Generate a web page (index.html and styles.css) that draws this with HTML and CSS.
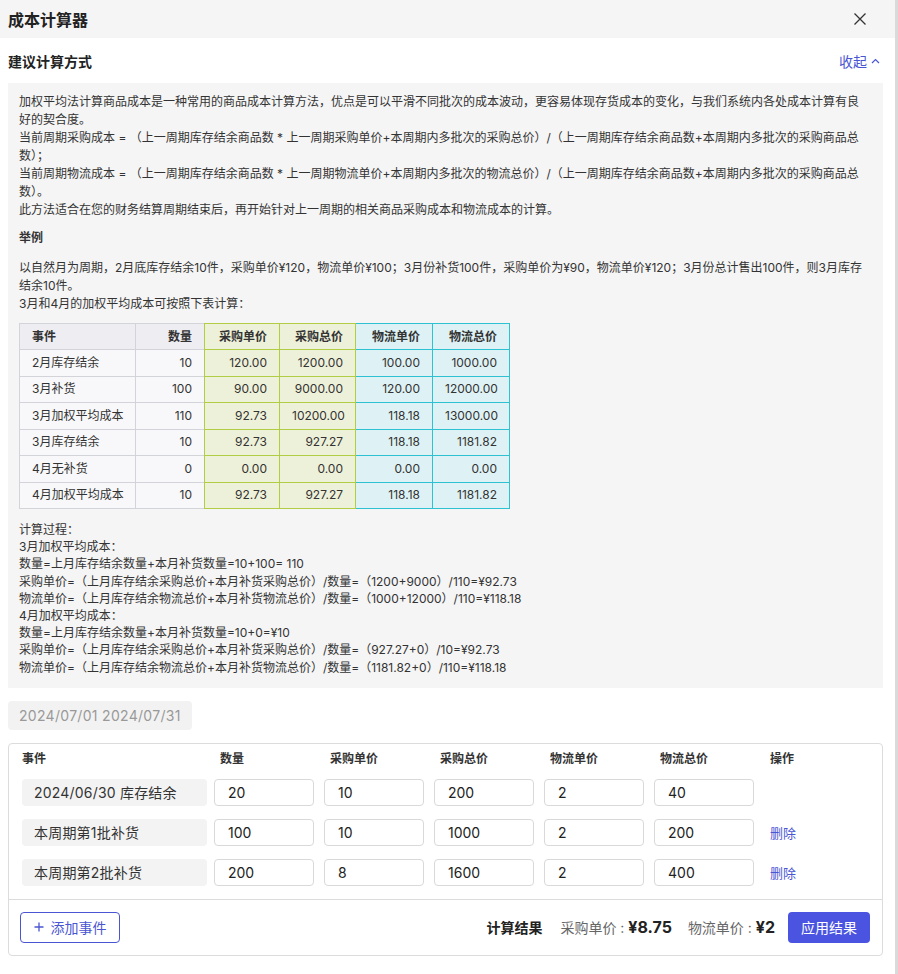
FILE: index.html
```html
<!DOCTYPE html>
<html>
  <head>
    <meta charset="utf-8">
    <title>成本计算器</title>
    <link rel="stylesheet" href="styles.css">
  </head>
  <body>
    <div class="dialog">
      <div class="dialog-header">
        <span class="dialog-title">成本计算器</span>
        <svg class="close-icon" width="14" height="14" viewBox="0 0 14 14">
          <path d="M1.5 1.5 L12.5 12.5 M12.5 1.5 L1.5 12.5" stroke="#333" stroke-width="1.3" fill="none"/>
        </svg>
      </div>

      <div class="dialog-body">
        <div class="section-head">
          <span class="section-title">建议计算方式</span>
          <a class="collapse-link">收起
            <svg width="9" height="6" viewBox="0 0 9 6">
              <path d="M1 5 L4.5 1.5 L8 5" stroke="#4a55d3" stroke-width="1.2" fill="none"/>
            </svg>
          </a>
        </div>

        <div class="tips-box">
          <p>加权平均法计算商品成本是一种常用的商品成本计算方法，优点是可以平滑不同批次的成本波动，更容易体现存货成本的变化，与我们系统内各处成本计算有良好的契合度。</p>
          <p>当前周期采购成本 = （上一周期库存结余商品数 * 上一周期采购单价+本周期内多批次的采购总价）/（上一周期库存结余商品数+本周期内多批次的采购商品总数）；</p>
          <p>当前周期物流成本 = （上一周期库存结余商品数 * 上一周期物流单价+本周期内多批次的物流总价）/（上一周期库存结余商品数+本周期内多批次的采购商品总数）。</p>
          <p>此方法适合在您的财务结算周期结束后，再开始针对上一周期的相关商品采购成本和物流成本的计算。</p>

          <p class="tips-title">举例</p>
          <p>以自然月为周期，2月底库存结余10件，采购单价¥120，物流单价¥100；3月份补货100件，采购单价为¥90，物流单价¥120；3月份总计售出100件，则3月库存结余10件。</p>
          <p>3月和4月的加权平均成本可按照下表计算：</p>

          <table class="example-table">
            <tr class="head-row">
              <th class="c-base first">事件</th>
              <th class="c-base qty">数量</th>
              <th class="c-buy first-buy">采购单价</th>
              <th class="c-buy">采购总价</th>
              <th class="c-ship">物流单价</th>
              <th class="c-ship">物流总价</th>
            </tr>
            <tr>
              <td class="c-base first">2月库存结余</td>
              <td class="c-base qty">10</td>
              <td class="c-buy first-buy">120.00</td>
              <td class="c-buy">1200.00</td>
              <td class="c-ship">100.00</td>
              <td class="c-ship">1000.00</td>
            </tr>
            <tr>
              <td class="c-base first">3月补货</td>
              <td class="c-base qty">100</td>
              <td class="c-buy first-buy">90.00</td>
              <td class="c-buy">9000.00</td>
              <td class="c-ship">120.00</td>
              <td class="c-ship">12000.00</td>
            </tr>
            <tr>
              <td class="c-base first">3月加权平均成本</td>
              <td class="c-base qty">110</td>
              <td class="c-buy first-buy">92.73</td>
              <td class="c-buy">10200.00</td>
              <td class="c-ship">118.18</td>
              <td class="c-ship">13000.00</td>
            </tr>
            <tr>
              <td class="c-base first">3月库存结余</td>
              <td class="c-base qty">10</td>
              <td class="c-buy first-buy">92.73</td>
              <td class="c-buy">927.27</td>
              <td class="c-ship">118.18</td>
              <td class="c-ship">1181.82</td>
            </tr>
            <tr>
              <td class="c-base first">4月无补货</td>
              <td class="c-base qty">0</td>
              <td class="c-buy first-buy">0.00</td>
              <td class="c-buy">0.00</td>
              <td class="c-ship">0.00</td>
              <td class="c-ship">0.00</td>
            </tr>
            <tr>
              <td class="c-base first">4月加权平均成本</td>
              <td class="c-base qty">10</td>
              <td class="c-buy first-buy">92.73</td>
              <td class="c-buy">927.27</td>
              <td class="c-ship">118.18</td>
              <td class="c-ship">1181.82</td>
            </tr>
          </table>

          <div class="calc-steps">
            <p>计算过程：</p>
            <p>3月加权平均成本：</p>
            <p>数量=上月库存结余数量+本月补货数量=10+100= 110</p>
            <p>采购单价=（上月库存结余采购总价+本月补货采购总价）/数量=（1200+9000）/110=¥92.73</p>
            <p>物流单价=（上月库存结余物流总价+本月补货物流总价）/数量=（1000+12000）/110=¥118.18</p>
            <p>4月加权平均成本：</p>
            <p>数量=上月库存结余数量+本月补货数量=10+0=¥10</p>
            <p>采购单价=（上月库存结余采购总价+本月补货采购总价）/数量=（927.27+0）/10=¥92.73</p>
            <p>物流单价=（上月库存结余物流总价+本月补货物流总价）/数量=（1181.82+0）/110=¥118.18</p>
          </div>
        </div>

        <div class="date-range">2024/07/01 2024/07/31</div>

        <div class="event-card">
          <div class="event-grid">
            <div class="col-label">事件</div>
            <div class="col-label pad">数量</div>
            <div class="col-label pad">采购单价</div>
            <div class="col-label pad">采购总价</div>
            <div class="col-label pad">物流单价</div>
            <div class="col-label pad">物流总价</div>
            <div class="col-label pad">操作</div>

            <div class="event-name">2024/06/30 库存结余</div>
            <input class="num-input" value="20">
            <input class="num-input" value="10">
            <input class="num-input" value="200">
            <input class="num-input" value="2">
            <input class="num-input" value="40">
            <div></div>

            <div class="event-name">本周期第1批补货</div>
            <input class="num-input" value="100">
            <input class="num-input" value="10">
            <input class="num-input" value="1000">
            <input class="num-input" value="2">
            <input class="num-input" value="200">
            <a class="delete-link">删除</a>

            <div class="event-name">本周期第2批补货</div>
            <input class="num-input" value="200">
            <input class="num-input" value="8">
            <input class="num-input" value="1600">
            <input class="num-input" value="2">
            <input class="num-input" value="400">
            <a class="delete-link">删除</a>
          </div>

          <div class="event-footer">
            <button class="add-button">
              <svg width="10" height="10" viewBox="0 0 10 10">
                <path d="M5 0.5 V9.5 M0.5 5 H9.5" stroke="#4a55d3" stroke-width="1.3" fill="none"/>
              </svg>
              添加事件
            </button>

            <div class="result-area">
              <span class="result-title">计算结果</span>
              <span class="result-item">采购单价 : <b>¥8.75</b></span>
              <span class="result-item">物流单价 : <b>¥2</b></span>
              <button class="apply-button">应用结果</button>
            </div>
          </div>
        </div>
      </div>
    </div>
  </body>
</html>
```

FILE: styles.css
```css
* {
  box-sizing: border-box;
}

body {
  margin: 0;
  font-family: Inter, "Noto Sans CJK SC", sans-serif;
  color: #333;
  background-color: white;
}

.dialog {
  width: 898px;
  height: 974px;
  border-right: 3px solid #dadada;
}

.dialog-header {
  display: flex;
  justify-content: space-between;
  align-items: center;
  height: 38px;
  padding: 0 28px 0 8px;
  background-color: #f5f5f5;
}

.dialog-title {
  font-size: 16px;
  font-weight: 600;
  color: #222;
}

.dialog-body {
  padding: 0 12px 0 8px;
}

.section-head {
  display: flex;
  justify-content: space-between;
  align-items: center;
  height: 45px;
  padding-right: 3px;
}

.section-title {
  font-size: 14px;
  font-weight: 600;
  color: #222;
}

.collapse-link {
  display: flex;
  align-items: center;
  gap: 4px;
  font-size: 14px;
  color: #4a55d3;
}

.tips-box {
  padding: 10px 16px 12px 11px;
  background-color: #f5f5f5;
  font-size: 12px;
  line-height: 18px;
  color: #333;
}

.tips-box p {
  margin: 0;
}

.tips-box .tips-title {
  margin: 10px 0 12px;
  font-weight: 600;
}

.example-table {
  width: 491px;
  margin: 10px 0 12px;
  table-layout: fixed;
  border-collapse: separate;
  border-spacing: 0;
  font-size: 12px;
  line-height: 16px;
}

.example-table th,
.example-table td {
  height: 26.5px;
  padding: 0 12px;
  border-right-width: 1px;
  border-right-style: solid;
  border-bottom-width: 1px;
  border-bottom-style: solid;
  text-align: right;
  white-space: nowrap;
}

.example-table .head-row th {
  height: 27px;
  border-top-width: 1px;
  border-top-style: solid;
  font-weight: 600;
}

.example-table .c-base {
  border-color: #d3d3da;
  background-color: #f8f8fa;
}

.example-table .head-row .c-base {
  background-color: #ededf2;
}

.example-table .c-base.first {
  width: 117px;
  border-left: 1px solid #d3d3da;
  text-align: left;
}

.example-table .c-base.qty {
  width: 68px;
  border-right: none;
}

.example-table .c-buy {
  width: 76px;
  border-color: #b1cd44;
  background-color: #eef1d9;
}

.example-table .c-buy.first-buy {
  border-left: 1px solid #b1cd44;
}

.example-table .c-ship {
  width: 77px;
  border-color: #2ec1d1;
  background-color: #def2f5;
}

.calc-steps {
  line-height: 17.2px;
}

.date-range {
  display: inline-block;
  margin-top: 13px;
  padding: 0 11px;
  height: 29px;
  line-height: 29px;
  border-radius: 4px;
  background-color: #f2f2f2;
  font-size: 14px;
  letter-spacing: 0.3px;
  color: #999;
}

.event-card {
  margin-top: 13px;
  border: 1px solid #dcdcdc;
  border-radius: 4px;
}

.event-grid {
  display: grid;
  grid-template-columns: 192px repeat(5, 110px) 1fr;
  row-gap: 13px;
  align-items: center;
  padding: 8px 13px 13px;
}

.col-label {
  height: 14px;
  line-height: 14px;
  font-size: 12px;
  font-weight: 600;
  color: #333;
}

.col-label.pad {
  padding-left: 6px;
}

.event-name {
  width: 185px;
  height: 27px;
  line-height: 27px;
  padding-left: 12px;
  border-radius: 4px;
  background-color: #f3f3f3;
  font-size: 14px;
  letter-spacing: 0.2px;
  color: #333;
}

.num-input {
  width: 100px;
  height: 27px;
  padding: 0 13px;
  border: 1px solid #d9d9d9;
  border-radius: 4px;
  font-family: inherit;
  font-size: 14px;
  color: #222;
  background-color: white;
}

.delete-link {
  padding-left: 6px;
  font-size: 13px;
  color: #4a55d3;
}

.event-footer {
  display: flex;
  justify-content: space-between;
  align-items: center;
  padding: 12px 12px 12px 11px;
  border-top: 1px solid #dcdcdc;
}

.add-button {
  display: flex;
  justify-content: center;
  align-items: center;
  gap: 7px;
  width: 100px;
  height: 31px;
  border: 1px solid #4a55d3;
  border-radius: 4px;
  background-color: white;
  font-family: inherit;
  font-size: 14px;
  color: #4a55d3;
}

.result-area {
  display: flex;
  align-items: center;
  font-size: 14px;
}

.result-title {
  margin-right: 18px;
  font-weight: 600;
  color: #222;
}

.result-item {
  margin-right: 16px;
  color: #666;
}

.result-item b {
  font-size: 16px;
  color: #222;
}

.apply-button {
  width: 82px;
  height: 31px;
  margin-left: -3px;
  border: none;
  border-radius: 4px;
  background-color: #4a54e1;
  font-family: inherit;
  font-size: 14px;
  color: white;
}
```
